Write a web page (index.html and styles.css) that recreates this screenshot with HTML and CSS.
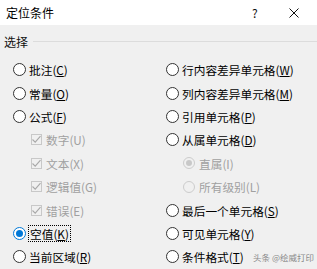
FILE: index.html
```html
<!DOCTYPE html>
<html lang="zh-CN">
  <head>
    <meta charset="UTF-8" />
    <title>定位条件</title>
    <link rel="stylesheet" href="styles.css">
  </head>
  <body>
    <div class="dialog">
      <div class="titlebar">
        <span class="title">定位条件</span>
        <span class="help">?</span>
        <span class="close">
          <svg width="10" height="10" viewBox="0 0 10 10"><path d="M0.5 0.5 L9.5 9.5 M9.5 0.5 L0.5 9.5" stroke="#111" stroke-width="1" fill="none"/></svg>
        </span>
      </div>
      <div class="group-head">
        <span class="legend">选择</span>
        <span class="rule"></span>
      </div>
      <div class="options">
        <div class="opt"><span class="radio"></span><span>批注(<u>C</u>)</span></div>
        <div class="opt"><span class="radio"></span><span>行内容差异单元格(<u>W</u>)</span></div>
        <div class="opt"><span class="radio"></span><span>常量(<u>O</u>)</span></div>
        <div class="opt"><span class="radio"></span><span>列内容差异单元格(<u>M</u>)</span></div>
        <div class="opt"><span class="radio"></span><span>公式(<u>F</u>)</span></div>
        <div class="opt"><span class="radio"></span><span>引用单元格(<u>P</u>)</span></div>
        <div class="opt sub off"><span class="check"><svg width="9" height="9" viewBox="0 0 9 9"><path d="M0.5 4.5 L3.2 7.2 L8.5 1.2" stroke="#a8a8a8" stroke-width="1.1" fill="none"/></svg></span><span>数字(U)</span></div>
        <div class="opt"><span class="radio"></span><span>从属单元格(<u>D</u>)</span></div>
        <div class="opt sub off"><span class="check"><svg width="9" height="9" viewBox="0 0 9 9"><path d="M0.5 4.5 L3.2 7.2 L8.5 1.2" stroke="#a8a8a8" stroke-width="1.1" fill="none"/></svg></span><span>文本(X)</span></div>
        <div class="opt sub-r off"><span class="radio small on-off"></span><span>直属(I)</span></div>
        <div class="opt sub off"><span class="check"><svg width="9" height="9" viewBox="0 0 9 9"><path d="M0.5 4.5 L3.2 7.2 L8.5 1.2" stroke="#a8a8a8" stroke-width="1.1" fill="none"/></svg></span><span>逻辑值(G)</span></div>
        <div class="opt sub-r off"><span class="radio small"></span><span>所有级别(L)</span></div>
        <div class="opt sub off"><span class="check"><svg width="9" height="9" viewBox="0 0 9 9"><path d="M0.5 4.5 L3.2 7.2 L8.5 1.2" stroke="#a8a8a8" stroke-width="1.1" fill="none"/></svg></span><span>错误(E)</span></div>
        <div class="opt"><span class="radio"></span><span>最后一个单元格(<u>S</u>)</span></div>
        <div class="opt"><span class="radio checked"></span><span class="focus">空值(<u>K</u>)</span></div>
        <div class="opt"><span class="radio"></span><span>可见单元格(<u>Y</u>)</span></div>
        <div class="opt"><span class="radio"></span><span>当前区域(<u>R</u>)</span></div>
        <div class="opt"><span class="radio"></span><span>条件格式(<u>T</u>)</span></div>
      </div>
      <span class="watermark">头条 @绘威打印</span>
    </div>
  </body>
</html>
```

FILE: styles.css
```css
body {
  margin: 0;
  background: #f0f0f0;
  font-family: "Noto Sans CJK SC", "Noto Sans", sans-serif;
  font-size: 12px;
  color: #000;
}
.dialog {
  position: relative;
  width: 317px;
  height: 269px;
  overflow: hidden;
  background: #f0f0f0;
}
.titlebar {
  display: flex;
  align-items: center;
  height: 25px;
  background: #fff;
  padding-left: 6px;
}
.title {
  flex: 1;
  line-height: 16px;
}
.help {
  width: 37px;
  font-size: 12px;
  color: #111;
}
.close {
  display: flex;
  width: 28px;
  padding-top: 1px;
}
.group-head {
  display: flex;
  align-items: center;
  height: 33px;
  padding-left: 4px;
}
.legend {
  line-height: 16px;
  color: #111;
}
.rule {
  flex: 1;
  height: 1px;
  margin-left: 5px;
  background: #dcdcdc;
}
.options {
  display: grid;
  grid-template-columns: 153px 1fr;
  grid-auto-rows: 23.4px;
  padding-left: 13px;
  font-size: 11.7px;
}
.opt {
  display: flex;
  align-items: center;
  gap: 3px;
  white-space: nowrap;
}
.opt u {
  text-decoration-thickness: 1px;
  text-underline-offset: 1px;
}
.radio {
  box-sizing: border-box;
  width: 13px;
  height: 13px;
  border: 1px solid #333;
  border-radius: 50%;
  background: #fff;
  flex: none;
}
.radio.checked {
  border-color: #0078d7;
  position: relative;
}
.radio.checked::after {
  content: "";
  position: absolute;
  left: 2px;
  top: 2px;
  width: 7px;
  height: 7px;
  border-radius: 50%;
  background: #0078d7;
}
.radio.small {
  width: 12px;
  height: 12px;
  border-color: #cccccc;
  background: #f0f0f0;
}
.radio.on-off {
  position: relative;
}
.radio.on-off::after {
  content: "";
  position: absolute;
  left: 2px;
  top: 2px;
  width: 6px;
  height: 6px;
  border-radius: 50%;
  background: #c8c8c8;
}
.sub {
  padding-left: 18px;
  gap: 4px;
}
.sub-r {
  padding-left: 17px;
  gap: 4px;
}
.off {
  color: #a0a0a0;
}
.check {
  box-sizing: border-box;
  display: flex;
  align-items: center;
  justify-content: center;
  width: 11px;
  height: 11px;
  border: 1px solid #c8c8c8;
  background: #f0f0f0;
}
.focus {
  outline: 1px dotted #000;
  outline-offset: 0;
  padding: 0 1px;
  line-height: 15px;
}
.watermark {
  position: absolute;
  left: 253px;
  top: 251px;
  font-size: 8.5px;
  color: #8a8a8a;
  white-space: nowrap;
}
```
